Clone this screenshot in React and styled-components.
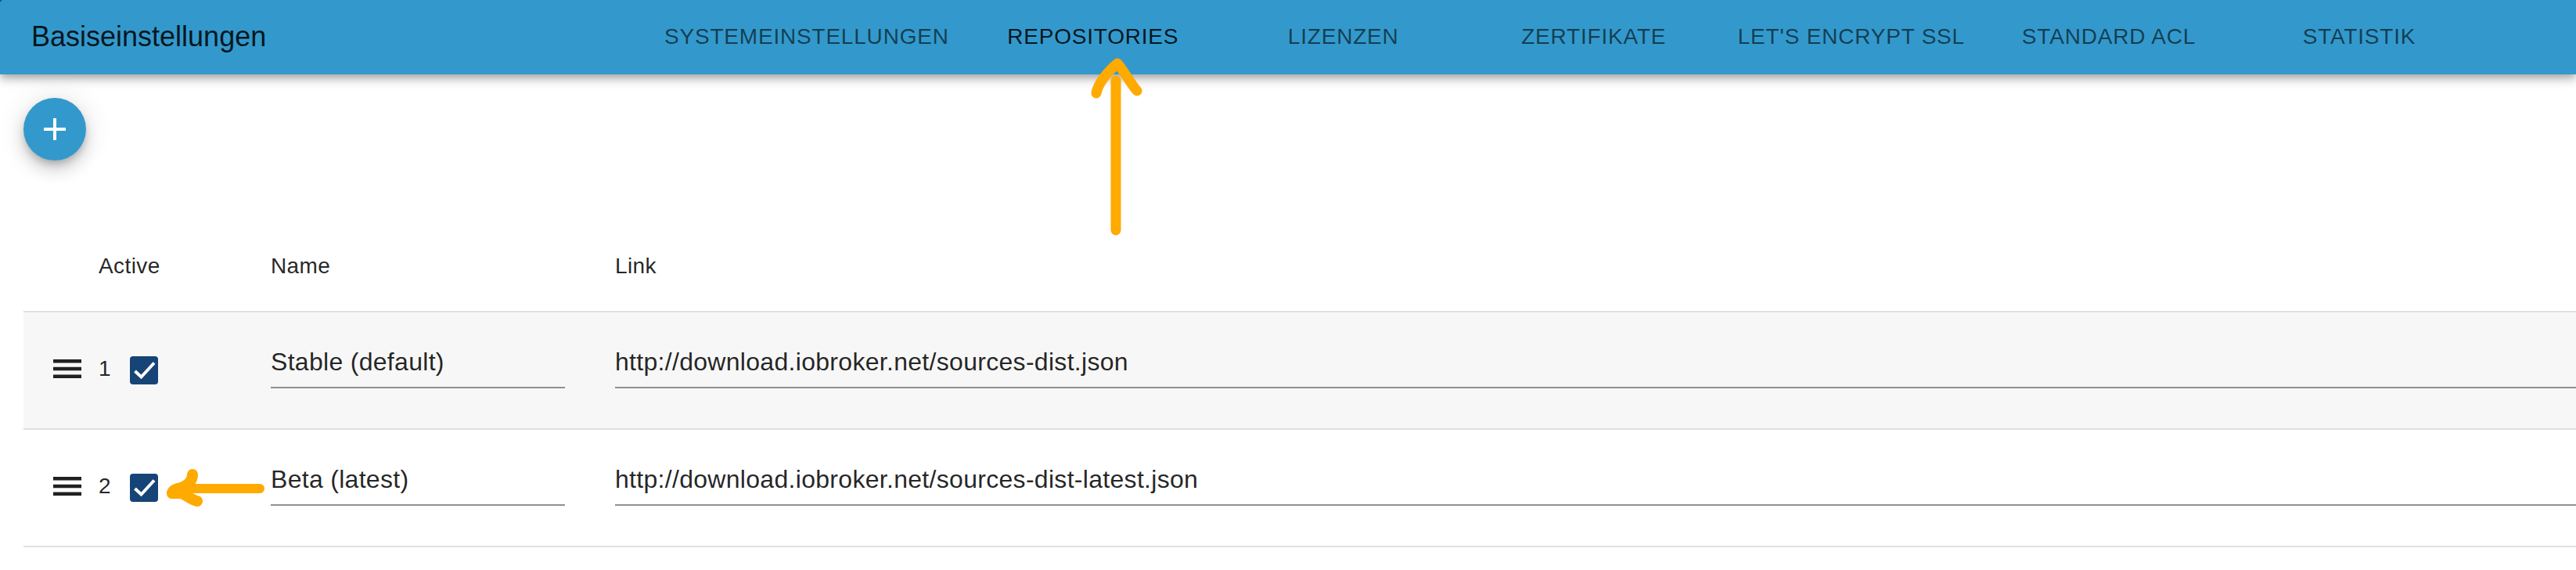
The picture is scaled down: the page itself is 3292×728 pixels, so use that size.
import styled, { createGlobalStyle } from 'styled-components';

const tabs = ['Systemeinstellungen', 'Repositories', 'Lizenzen', 'Zertifikate', "Let's encrypt SSL", 'Standard ACL', 'Statistik'];

const repositories = [
	{ id: 1, name: 'Stable (default)', link: 'http://download.iobroker.net/sources-dist.json' },
	{ id: 2, name: 'Beta (latest)', link: 'http://download.iobroker.net/sources-dist-latest.json' },
];

const App = () => {
	return (
		<Page>
			<GlobalStyle />
			<Header>
				<Title>Basiseinstellungen</Title>
				<Tabs>
					{tabs.map((t, index) => <Tab key={t} $active={index === 1}>{t}</Tab>)}
				</Tabs>
			</Header>
			<Content>
				<AddButton aria-label="add">
					<svg width="48" height="48" viewBox="0 0 24 24" fill="#fff"><path d="M19 13h-6v6h-2v-6H5v-2h6V5h2v6h6v2z" /></svg>
				</AddButton>
				<HeadRow>
					<HeadCell>Active</HeadCell>
					<HeadCell>Name</HeadCell>
					<HeadCell>Link</HeadCell>
				</HeadRow>
				<List>
					{repositories.map((r, index) => (
						<Row key={r.id} $odd={index % 2 === 0}>
							<Handle viewBox="0 0 48 48" fill="#212121"><path d="M6 10h36v4.5H6zM6 19.75h36v4.5H6zM6 29.5h36V34H6z" /></Handle>
							<Num>{r.id}</Num>
							<Check viewBox="0 0 36 36">
								<rect width="36" height="36" rx="4" fill="#164477" />
								<path d="M6.5 19l8 7.5L31 8.5" fill="none" stroke="#fff" strokeWidth="4" />
							</Check>
							<NameField>{r.name}</NameField>
							<LinkField>{r.link}</LinkField>
						</Row>
					))}
				</List>
			</Content>
			<Scribble width="3292" height="728" viewBox="0 0 3292 728" fill="none" stroke="#FFAA00" strokeLinecap="round" strokeLinejoin="round">
				<g strokeWidth="13">
					<path d="M1426 103V294" />
					<path d="M1401 119c2-12 14-27 27-38c8 9 17 26 25 35" />
				</g>
				<path d="M332 624H236" strokeWidth="12" />
				<path d="M246 606c0 9-6 13-14 17c-6 1-11 2-12 7" strokeWidth="14" />
				<path d="M220 630l12 0c6 2 11 8 20 10" strokeWidth="14" />
			</Scribble>
		</Page>
	);
};

export default App;

const GlobalStyle = createGlobalStyle`
	html, body {
		margin: 0;
		padding: 0;
		background: #fff;
		overflow: hidden;
	}
	body {
		font-family: 'Liberation Sans', Arial, sans-serif;
		color: rgba(0, 0, 0, 0.87);
	}
`;

const Page = styled.div`
	position: relative;
	width: 3292px;
	height: 728px;
	overflow: hidden;
`;

const Header = styled.header`
	position: relative;
	z-index: 1;
	display: flex;
	align-items: flex-start;
	height: 95px;
	background: radial-gradient(circle at 4px 4px, #3399CC 3.5px, #1c3b55 4.5px) 0 0 / 4px 4px no-repeat, #3399CC;
	box-shadow: 0 4px 8px -2px rgba(0, 0, 0, 0.2), 0 8px 10px 0 rgba(0, 0, 0, 0.14), 0 2px 20px 0 rgba(0, 0, 0, 0.12);
`;

const Title = styled.div`
	width: 825px;
	padding: 26px 0 0 40px;
	box-sizing: border-box;
	font-size: 36px;
	line-height: 42px;
	color: rgba(0, 0, 0, 0.87);
`;

const Tabs = styled.nav`
	display: flex;
`;

const Tab = styled.div`
	min-width: 320px;
	padding: 0 24px;
	box-sizing: border-box;
	text-align: center;
	font-size: 28px;
	line-height: 94px;
	letter-spacing: 0.8px;
	text-transform: uppercase;
	color: ${(p) => (p.$active ? 'rgba(0, 0, 0, 0.87)' : 'rgba(0, 0, 0, 0.6)')};
`;

const Content = styled.main`
	padding: 30px 0 0 30px;
`;

const AddButton = styled.button`
	display: flex;
	align-items: center;
	justify-content: center;
	width: 80px;
	height: 80px;
	padding: 0;
	border: 0;
	border-radius: 50%;
	background: #3399CC;
	box-shadow: 0 6px 10px -2px rgba(0, 0, 0, 0.2), 0 12px 20px 0 rgba(0, 0, 0, 0.14), 0 2px 36px 0 rgba(0, 0, 0, 0.12);
`;

const HeadRow = styled.div`
	display: grid;
	grid-template-columns: 220px 440px 1fr;
	align-items: end;
	box-sizing: border-box;
	height: 192px;
	padding: 0 0 41px 96px;
`;

const HeadCell = styled.div`
	font-size: 28px;
	line-height: 32px;
	letter-spacing: 0.4px;
`;

const List = styled.div`
	border-top: 2px solid #e0e0e0;
`;

const Row = styled.div`
	display: flex;
	align-items: center;
	height: 148px;
	background: ${(p) => (p.$odd ? '#f7f7f7' : '#fff')};
	border-bottom: 2px solid #e0e0e0;
`;

const Handle = styled.svg`
	flex: none;
	width: 48px;
	height: 48px;
	margin-left: 32px;
`;

const Num = styled.div`
	width: 56px;
	padding-left: 16px;
	margin-bottom: 4px;
	box-sizing: border-box;
	font-size: 28px;
`;

const Check = styled.svg`
	flex: none;
	width: 36px;
	height: 36px;
`;

const Field = styled.div`
	box-sizing: border-box;
	align-self: flex-start;
	height: 52px;
	margin-top: 45px;
	font-size: 32px;
	line-height: 36px;
	letter-spacing: 0.3px;
	border-bottom: 2px solid #8f8f8f;
`;

const NameField = styled(Field)`
	flex: none;
	width: 376px;
	margin-left: 144px;
`;

const LinkField = styled(Field)`
	flex: 1;
	margin-left: 64px;
`;

const Scribble = styled.svg`
	position: absolute;
	z-index: 2;
	top: 0;
	left: 0;
	pointer-events: none;
`;
